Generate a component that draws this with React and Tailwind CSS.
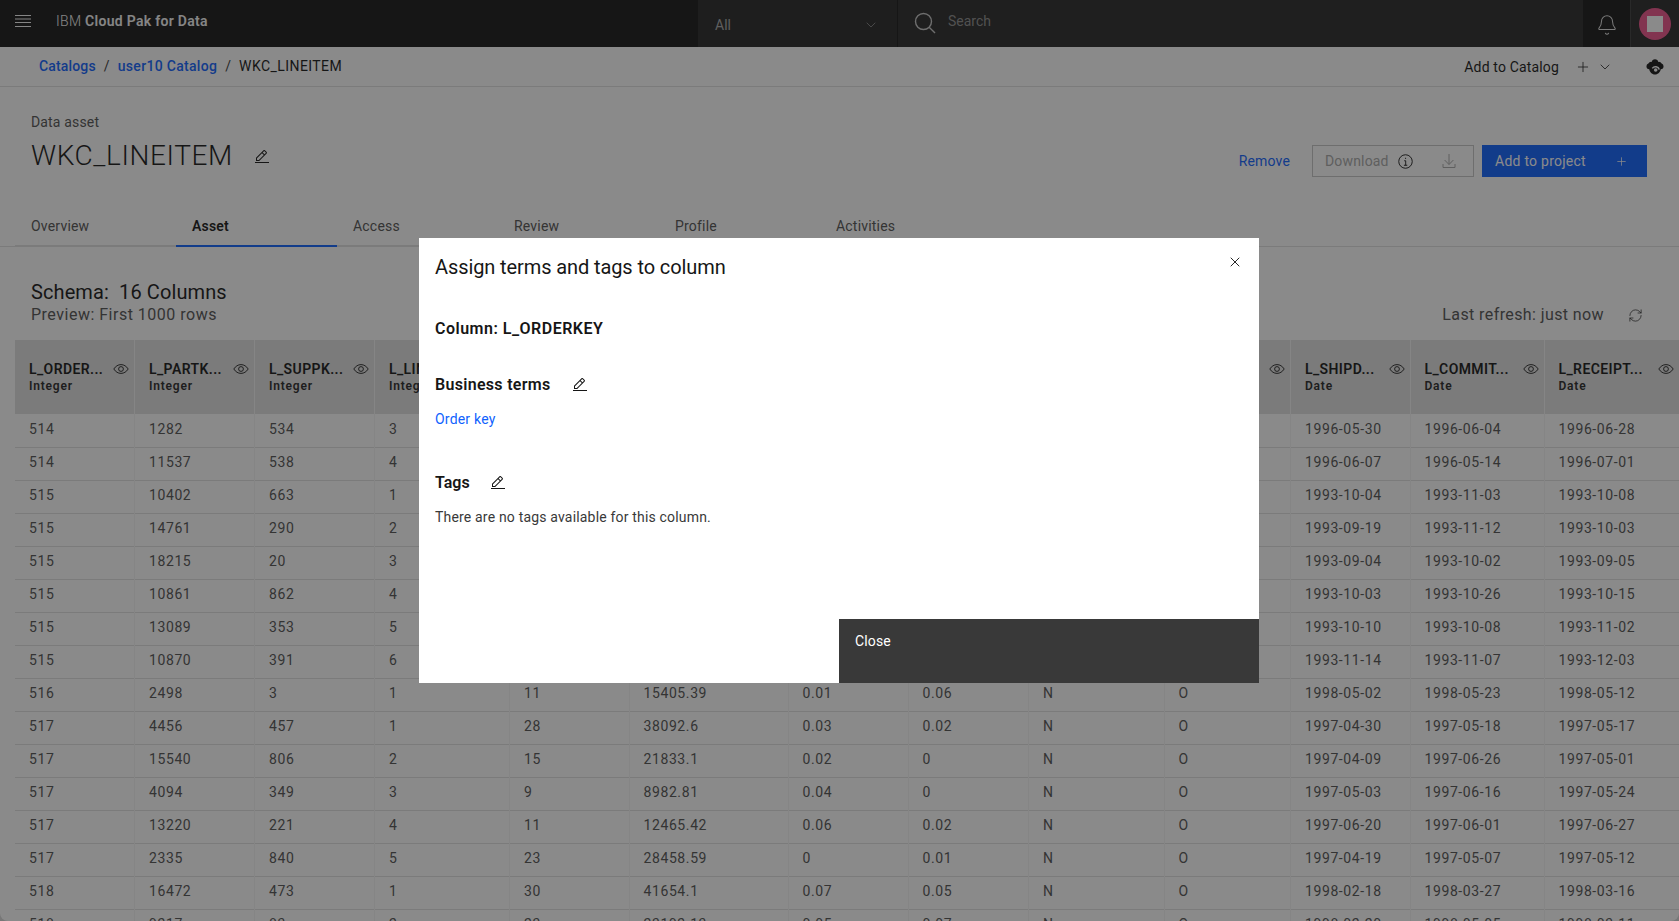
import { Bell, ChevronDown, Plus, RefreshCw, X } from "lucide-react";

const columns = [
  { name: "L_ORDER...", type: "Integer", w: 119.5 },
  { name: "L_PARTK...", type: "Integer", w: 120 },
  { name: "L_SUPPK...", type: "Integer", w: 120 },
  { name: "L_LINEN...", type: "Integer", w: 135 },
  { name: "L_QUAN...", type: "Integer", w: 119.5 },
  { name: "L_EXTENDEDP...", type: "Decimal", w: 159 },
  { name: "L_DISC...", type: "Decimal", w: 120 },
  { name: "L_TAX", type: "Decimal", w: 120.5 },
  { name: "L_RETURNF...", type: "String", w: 135.5 },
  { name: "L_LINES...", type: "String", w: 126.5 },
  { name: "L_SHIPD...", type: "Date", w: 119.5 },
  { name: "L_COMMIT...", type: "Date", w: 134 },
  { name: "L_RECEIPT...", type: "Date", w: 135 },
];

const rows = [
  ["514", "1282", "534", "3", "34", "43971.52", "0.07", "0.01", "N", "O", "1996-05-30", "1996-06-04", "1996-06-28"],
  ["514", "11537", "538", "4", "6", "8691.18", "0.06", "0.08", "N", "O", "1996-06-07", "1996-05-14", "1996-07-01"],
  ["515", "10402", "663", "1", "10", "13124", "0.03", "0.02", "R", "F", "1993-10-04", "1993-11-03", "1993-10-08"],
  ["515", "14761", "290", "2", "38", "64153.88", "0.1", "0.07", "A", "F", "1993-09-19", "1993-11-12", "1993-10-03"],
  ["515", "18215", "20", "3", "11", "12411.31", "0", "0.02", "R", "F", "1993-09-04", "1993-10-02", "1993-09-05"],
  ["515", "10861", "862", "4", "34", "60259.24", "0.09", "0.03", "R", "F", "1993-10-03", "1993-10-26", "1993-10-15"],
  ["515", "13089", "353", "5", "6", "5952.48", "0.04", "0.06", "A", "F", "1993-10-10", "1993-10-08", "1993-11-02"],
  ["515", "10870", "391", "6", "21", "37201.27", "0.04", "0.08", "R", "F", "1993-11-14", "1993-11-07", "1993-12-03"],
  ["516", "2498", "3", "1", "11", "15405.39", "0.01", "0.06", "N", "O", "1998-05-02", "1998-05-23", "1998-05-12"],
  ["517", "4456", "457", "1", "28", "38092.6", "0.03", "0.02", "N", "O", "1997-04-30", "1997-05-18", "1997-05-17"],
  ["517", "15540", "806", "2", "15", "21833.1", "0.02", "0", "N", "O", "1997-04-09", "1997-06-26", "1997-05-01"],
  ["517", "4094", "349", "3", "9", "8982.81", "0.04", "0", "N", "O", "1997-05-03", "1997-06-16", "1997-05-24"],
  ["517", "13220", "221", "4", "11", "12465.42", "0.06", "0.02", "N", "O", "1997-06-20", "1997-06-01", "1997-06-27"],
  ["517", "2335", "840", "5", "23", "28458.59", "0", "0.01", "N", "O", "1997-04-19", "1997-05-07", "1997-05-12"],
  ["518", "16472", "473", "1", "30", "41654.1", "0.07", "0.05", "N", "O", "1998-02-18", "1998-03-27", "1998-03-16"],
  ["518", "9217", "83", "2", "23", "23192.13", "0.05", "0.07", "N", "O", "1998-02-20", "1998-05-05", "1998-03-11"],
];

const tabs = ["Overview", "Asset", "Access", "Review", "Profile", "Activities"];

function EditIcon({ className }) {
  return (
    <svg viewBox="0 0 16 16" fill="currentColor" className={className}>
      <path d="M1 13h14v1H1zM12.7 4.5c.4-.4.4-1 0-1.4l-1.8-1.8c-.4-.4-1-.4-1.4 0L2 8.8V12h3.2l7.5-7.5zM10.2 2L12 3.8l-1.5 1.5-1.8-1.8L10.2 2zM3 11V9.2l5-5L9.8 6l-5 5H3z" />
    </svg>
  );
}

function EyeIcon() {
  return (
    <svg viewBox="0 0 16 16" fill="none" stroke="currentColor" strokeWidth="0.9" className="h-4 w-4 shrink-0 text-[#161616]">
      <path d="M.8 8C2.6 5.2 5.1 3.6 8 3.6s5.4 1.6 7.2 4.4c-1.8 2.8-4.3 4.4-7.2 4.4S2.6 10.8.8 8z" />
      <circle cx="8" cy="8" r="2.4" />
    </svg>
  );
}

function Header() {
  return (
    <header className="flex h-[47px] shrink-0 bg-[#161616] text-[#f4f4f4]">
      <div className="flex w-[698px] shrink-0 items-center pb-[5px] pl-[15px]">
        <svg viewBox="0 0 16 12" className="h-3 w-4" stroke="currentColor" fill="none" strokeWidth="1">
          <path d="M0 .5h16M0 4h16M0 7.5h16M0 11.5h16" />
        </svg>
        <span className="ml-[25px] text-sm tracking-[0.3px]">
          <span className="font-light">IBM </span>
          <span className="font-semibold">Cloud Pak for Data</span>
        </span>
      </div>
      <div className="flex w-[200px] shrink-0 items-center justify-between border-r border-[#161616] bg-[#262626] pl-[17px] pr-[18px] text-sm text-[#a8a8a8]">
        <span className="pt-0.5">All</span>
        <ChevronDown size={16} strokeWidth={1} className="mt-0.5" />
      </div>
      <div className="flex flex-1 items-center bg-[#282828] pb-0.5 pl-[16px] text-sm text-[#8d8d8d]">
        <svg viewBox="0 0 22 22" fill="none" stroke="#c6c6c6" strokeWidth="1.4" className="h-[22px] w-[22px]">
          <circle cx="9.5" cy="9.5" r="8" />
          <path d="M15.2 15.2l5.8 5.8" />
        </svg>
        <span className="ml-[12px] pb-1">Search</span>
      </div>
      <div className="flex w-[48px] shrink-0 items-center justify-center border-r border-[#3d3d3d] bg-[#161616] pt-0.5">
        <Bell size={22} strokeWidth={1.1} className="text-[#e0e0e0]" />
      </div>
      <div className="flex w-[48px] shrink-0 items-center justify-center bg-[#282828]">
        <div className="flex h-8 w-8 items-center justify-center rounded-full bg-[#ee538b]">
          <div className="h-4 w-4 bg-white" />
        </div>
      </div>
    </header>
  );
}

function Breadcrumb() {
  return (
    <div className="flex h-[40px] shrink-0 items-center justify-between border-b border-[#e0e0e0] pl-[39px] pr-[15px] text-sm tracking-[0.16px]">
      <div className="flex items-center pb-[2px]">
        <span className="font-medium text-[#0f62fe]">Catalogs</span>
        <span className="mx-[8px] text-[#393939]">/</span>
        <span className="font-medium tracking-[0.3px] text-[#0f62fe]">user10 Catalog</span>
        <span className="mx-[8px] text-[#393939]">/</span>
        <span className="tracking-[0.43px] text-[#161616]">WKC_LINEITEM</span>
      </div>
      <div className="flex items-center text-[#161616]">
        <span>Add to Catalog</span>
        <Plus size={16} strokeWidth={1.2} className="ml-[16px]" />
        <ChevronDown size={16} strokeWidth={1.2} className="ml-[6px]" />
        <svg viewBox="0 0 16 16" className="ml-[33px] h-[18px] w-[18px]">
          <path fill="#161616" d="M8 1a3 3 0 0 1 2.9 2.5 2.9 2.9 0 0 1 3 1.4A2.6 2.6 0 0 1 15.6 7.300a2.700 2.700 0 0 1-2.500 2.700c-.4 2.400-2.300 4.700-5.100 4.700S3.300 12.400 2.900 10A2.700 2.700 0 0 1 .4 7.300a2.600 2.600 0 0 1 1.700-2.400 2.900 2.900 0 0 1 3-1.400A3 3 0 0 1 8 1z" />
          <path fill="none" stroke="#fff" strokeWidth="1.4" d="M11.800 10.300A3.500 3.500 0 0 0 5.600 9.200" />
          <circle cx="8.600" cy="10.600" r="1.600" fill="#fff" />
        </svg>
      </div>
    </div>
  );
}

function AssetHeader() {
  return (
    <div className="flex h-[95px] shrink-0 items-start justify-between pl-[31px] pr-[32px] pt-[27px]">
      <div>
        <div className="text-sm leading-[16px] tracking-[0.16px] text-[#525252]">Data asset</div>
        <div className="mt-[8px] flex items-center">
          <h1 className="text-[28px] font-light leading-[36px] tracking-[0.6px] text-[#161616]">WKC_LINEITEM</h1>
          <EditIcon className="ml-[21px] mt-0.5 h-4 w-4 text-[#161616]" />
        </div>
      </div>
      <div className="mt-[31px] flex items-center text-sm tracking-[0.16px]">
        <span className="mr-[22px] text-[#0f62fe]">Remove</span>
        <div className="flex h-8 w-[162px] items-center border border-[#c6c6c6] pl-3 text-[#a8a8a8]">
          <span>Download</span>
          <svg viewBox="0 0 16 16" fill="none" stroke="#161616" className="ml-[9px] h-[15px] w-[15px]">
            <circle cx="8" cy="8" r="7.2" strokeWidth="1" />
            <path d="M6.6 7.2H8.2V12M6.3 12h3.6" strokeWidth="1" />
            <path d="M7.7 4h.9v1.2h-.9z" fill="#161616" stroke="none" />
          </svg>
          <svg viewBox="0 0 16 16" fill="none" stroke="currentColor" className="ml-[28px] h-4 w-4">
            <path d="M8 1v10.4M3.6 7l4.4 4.5L12.4 7M2 11v3.5h12V11" strokeWidth="1" />
          </svg>
        </div>
        <div className="ml-2 flex h-8 w-[165px] items-center justify-between bg-[#0f62fe] pl-[13px] pr-[19px] tracking-[0.25px] text-white">
          <span>Add to project</span>
          <Plus size={13} strokeWidth={1.4} />
        </div>
      </div>
    </div>
  );
}

function Tabs() {
  return (
    <div className="flex h-[65px] shrink-0 items-end border-b border-[#e0e0e0] pl-[15px]">
      {tabs.map((t) => (
        <div
          key={t}
          className={`-mb-px flex h-[33px] w-[161px] items-start border-b-2 pl-4 pt-[2px] text-sm tracking-[0.2px] ${
            t === "Asset" ? "border-[#0f62fe] font-semibold text-[#161616]" : "border-[#e0e0e0] text-[#525252]"
          }`}
        >
          {t}
        </div>
      ))}
    </div>
  );
}

function SchemaInfo() {
  return (
    <div className="flex h-[93px] shrink-0 items-start justify-between pl-[31px] pr-[36px] pt-[32px]">
      <div>
        <div className="whitespace-pre text-xl leading-[26px] tracking-[0.1px] text-[#161616]">Schema:  16 Columns</div>
        <div className="text-base leading-[20px] tracking-[0.5px] text-[#525252]">Preview: First 1000 rows</div>
      </div>
      <div className="mt-[26px] flex items-center text-base leading-[20px] tracking-[0.4px] text-[#525252]">
        <span>Last refresh: just now</span>
        <RefreshCw size={15} strokeWidth={1.1} className="ml-[24px] text-[#161616]" />
      </div>
    </div>
  );
}

function SchemaTable() {
  return (
    <div className="ml-[15px] overflow-hidden">
      <table className="w-[1664px] table-fixed border-collapse text-left">
        <colgroup>
          {columns.map((c) => (
            <col key={c.name} style={{ width: c.w }} />
          ))}
        </colgroup>
        <thead>
          <tr className="h-[74px] bg-[#e0e0e0]">
            {columns.map((c) => (
              <th key={c.name} className="border-r border-[#f4f4f4] pl-[14px] pr-[5px] align-middle font-normal">
                <div className="flex items-center justify-between gap-1">
                  <span className="overflow-hidden whitespace-nowrap text-sm font-semibold leading-[18px] tracking-[0.4px] text-[#161616]">{c.name}</span>
                  <EyeIcon />
                </div>
                <div className="text-xs font-semibold leading-[16px] tracking-[0.8px] text-[#262626]">{c.type}</div>
              </th>
            ))}
          </tr>
        </thead>
        <tbody>
          {rows.map((r, i) => (
            <tr key={i} className="h-[33px] border-b border-[#e0e0e0]">
              {r.map((v, j) => (
                <td key={j} className="border-r border-[#f4f4f4] pb-[3px] pl-[14px] text-sm tracking-[0.6px] text-[#525252]">
                  {v}
                </td>
              ))}
            </tr>
          ))}
        </tbody>
      </table>
    </div>
  );
}

function Modal() {
  return (
    <div className="fixed inset-0 flex items-center justify-center bg-[#161616]/50 pr-px">
      <div className="relative flex h-[445px] w-[840px] flex-col justify-between bg-white">
        <div className="pl-4 pt-[16px] text-[#161616]">
          <h2 className="text-xl font-normal leading-[26px] tracking-[-0.1px]">Assign terms and tags to column</h2>
          <div className="mt-[38px] text-base font-semibold leading-[22px] tracking-[0.5px]">Column: L_ORDERKEY</div>
          <div className="mt-[34px] flex items-center text-base font-semibold leading-[22px] tracking-[0.3px]">
            <span>Business terms</span>
            <EditIcon className="ml-[21px] h-4 w-4" />
          </div>
          <div className="mt-[14px] text-sm leading-[18px] tracking-[0.2px] text-[#0f62fe]">Order key</div>
          <div className="mt-[44px] flex items-center text-base font-semibold leading-[22px]">
            <span>Tags</span>
            <EditIcon className="ml-[20px] h-4 w-4" />
          </div>
          <div className="mt-[14px] text-sm leading-[18px] tracking-[0.18px] text-[#393939]">There are no tags available for this column.</div>
        </div>
        <X size={16} strokeWidth={1.4} className="absolute right-[16px] top-[16px] text-[#161616]" />
        <div className="flex justify-end">
          <button className="h-16 w-[420px] bg-[#393939] pb-[20px] pl-4 text-left text-sm tracking-[0.16px] text-white">Close</button>
        </div>
      </div>
    </div>
  );
}

export default function App() {
  return (
    <div className="h-[921px] overflow-hidden bg-[#d8d8d8]" style={{ fontFamily: "Roboto, 'Noto Sans', sans-serif" }}>
      <div className="flex h-[921px] flex-col overflow-hidden rounded-b-[8px] bg-white">
        <Header />
        <Breadcrumb />
        <AssetHeader />
        <Tabs />
        <SchemaInfo />
        <SchemaTable />
      </div>
      <Modal />
    </div>
  );
}
